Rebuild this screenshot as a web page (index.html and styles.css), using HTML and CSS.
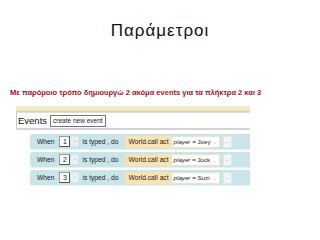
FILE: index.html
```html
<!DOCTYPE html>
<html>
<head>
<meta charset="utf-8">
<link rel="stylesheet" href="styles.css">
</head>
<body>
<div class="slide">
  <h1 class="title">Παράμετροι</h1>
  <p class="note">Με παρόμοιο τρόπο δημιουργώ 2 ακόμα events για τα πλήκτρα 2 και 3</p>
  <div class="panel">
    <div class="strip"></div>
    <div class="header">
      <span class="events">Events</span>
      <span class="create">create new event</span>
    </div>
    <div class="rule"></div>
    <div class="rows">
      <div class="row">
        <span class="lbl">When</span>
        <span class="key">1</span><span class="drop">⌄</span>
        <span class="lbl typed">is typed , do</span>
        <span class="call"><span class="cname">World.call act</span><span class="param"><i>player</i>&nbsp;= Joey<span class="arr">⌄</span></span></span>
        <span class="minus">–</span>
      </div>
      <div class="row">
        <span class="lbl">When</span>
        <span class="key">2</span><span class="drop">⌄</span>
        <span class="lbl typed">is typed , do</span>
        <span class="call"><span class="cname">World.call act</span><span class="param"><i>player</i>&nbsp;= Jock<span class="arr">⌄</span></span></span>
        <span class="minus">–</span>
      </div>
      <div class="row">
        <span class="lbl">When</span>
        <span class="key">3</span><span class="drop">⌄</span>
        <span class="lbl typed">is typed , do</span>
        <span class="call"><span class="cname">World.call act</span><span class="param"><i>player</i>&nbsp;= Suzi<span class="arr">⌄</span></span></span>
        <span class="minus">–</span>
      </div>
    </div>
  </div>
</div>
</body>
</html>
```
FILE: styles.css
```css
html, body {
  margin: 0;
  padding: 0;
  background: #ffffff;
}
.slide {
  width: 320px;
  height: 240px;
  overflow: hidden;
  font-family: "Liberation Sans", Arial, sans-serif;
}
.title {
  margin: 0;
  padding-top: 21px;
  height: 20px;
  text-align: center;
  font-weight: normal;
  font-size: 17px;
  line-height: 20px;
  letter-spacing: 1px;
  color: #111111;
}
.note {
  margin: 0;
  margin-top: 47px;
  padding-left: 10px;
  font-size: 7.5px;
  line-height: 9px;
  font-weight: bold;
  color: #a3121a;
}
.panel {
  margin-top: 9px;
  margin-left: 16px;
  width: 234px;
}
.strip {
  height: 5px;
  background: #efeac3;
  border-bottom: 1px solid #d9d3a8;
}
.header {
  display: flex;
  align-items: center;
  gap: 3px;
  height: 15px;
  border-left: 1px solid #c8c8c8;
  border-top: 1px solid #dddddd;
  padding-left: 1px;
}
.events {
  font-size: 9.5px;
  color: #111111;
}
.create {
  font-size: 6.5px;
  line-height: 10px;
  height: 10px;
  padding: 0 2px;
  border: 1px solid #777777;
  background: #ffffff;
  color: #222222;
}
.rule {
  height: 2px;
  background: #d4d4d4;
}
.rows {
  padding-top: 4px;
  padding-left: 14px;
  display: flex;
  flex-direction: column;
  gap: 2px;
}
.row {
  height: 15px;
  display: flex;
  align-items: center;
  white-space: nowrap;
  background: #c9e5ea;
  border-radius: 3px 0 0 3px;
  border-bottom: 1px solid #e6f1f2;
  padding-left: 7px;
  font-size: 6.7px;
  color: #1a1a1a;
}
.lbl {
  margin-right: 5px;
}
.typed {
  margin-left: 3px;
  margin-right: 6px;
}
.key {
  width: 11px;
  height: 11px;
  line-height: 10px;
  text-align: center;
  background: #ffffff;
  border: 1px solid #9a9a9a;
  border-right-color: #555555;
  border-bottom-color: #555555;
  font-size: 7px;
  box-sizing: border-box;
}
.drop {
  width: 9px;
  height: 11px;
  line-height: 7px;
  text-align: center;
  font-size: 5px;
  color: #aaaaaa;
  background: #e8f2f4;
  border: 1px solid #d8e6ea;
  box-sizing: border-box;
}
.call {
  display: flex;
  align-items: center;
  height: 12px;
  background: #fbe3b0;
  border-radius: 2px;
  padding-left: 4px;
}
.cname {
  margin-right: 2px;
}
.param {
  display: flex;
  align-items: center;
  flex-shrink: 0;
  height: 12px;
  background: #ffffff;
  border: 1px solid #ece4c8;
  box-sizing: border-box;
  padding-left: 2px;
  width: 49px;
  font-size: 6.2px;
}
.arr {
  margin-left: auto;
  margin-right: 2px;
  font-size: 5px;
  color: #bbbbbb;
}
.minus {
  flex-shrink: 0;
  margin-left: 3px;
  width: 9px;
  height: 12px;
  line-height: 11px;
  text-align: center;
  background: #f2f6f7;
  border: 1px solid #dde8ea;
  box-sizing: border-box;
  font-size: 5px;
  color: #aaaaaa;
}
```
